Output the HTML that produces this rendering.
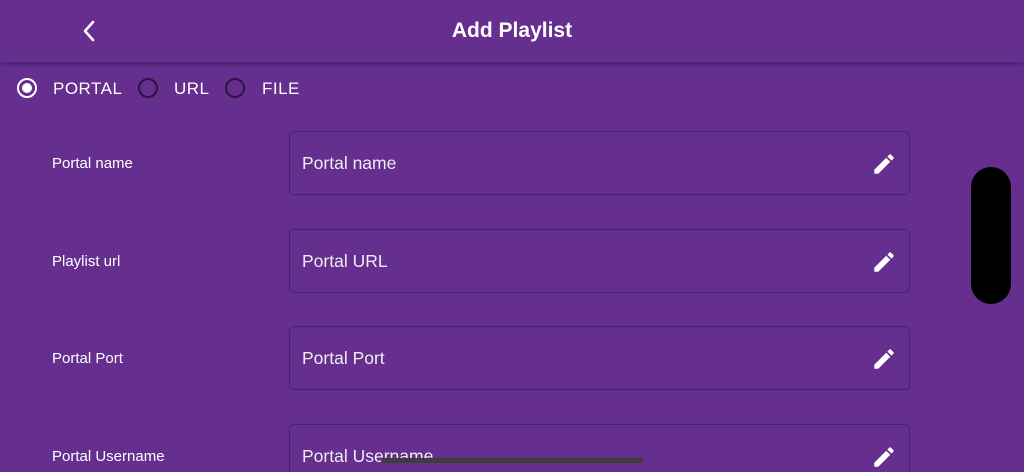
<!DOCTYPE html>
<html><head><meta charset="utf-8"><style>
*{margin:0;padding:0;box-sizing:border-box}
html,body{width:1024px;height:472px;overflow:hidden}
body{background:#652e8f;font-family:"Liberation Sans",sans-serif;color:#fff;position:relative}
.hdr{position:absolute;left:0;top:0;width:1024px;height:62px;background:#652e8f;box-shadow:0 2px 4px rgba(0,0,0,.3);z-index:2}
.title{position:absolute;left:0;width:1024px;top:19px;text-align:center;font-size:21px;font-weight:bold}
.radio{position:absolute;top:78px;width:20px;height:20px;border-radius:50%;border:2px solid #2a1640}
.radio.on{border-color:#fff}
.radio.on:after{content:"";position:absolute;left:3px;top:3px;width:10px;height:10px;border-radius:50%;background:#fff}
.rl{position:absolute;top:79px;font-size:17px;letter-spacing:.5px}
.lab{position:absolute;left:52px;font-size:15px}
.field{position:absolute;left:289px;width:621px;height:64px;border:1.5px solid #4a2170;border-radius:5px}
.field span{position:absolute;left:12px;top:21px;font-size:17.5px;color:#eee}
.field svg{position:absolute;right:12px;top:19px}
</style></head><body>
<div class="hdr">
<svg style="position:absolute;left:80px;top:19px" width="18" height="24" viewBox="0 0 18 24"><path d="M13 3 L5 12 L13 21" stroke="#fff" stroke-width="2.6" fill="none" stroke-linecap="round" stroke-linejoin="round"/></svg>
<div class="title">Add Playlist</div>
</div>
<div class="radio on" style="left:17px"></div><div class="rl" style="left:53px">PORTAL</div>
<div class="radio" style="left:138px"></div><div class="rl" style="left:174px">URL</div>
<div class="radio" style="left:225px"></div><div class="rl" style="left:262px">FILE</div>

<div class="lab" style="top:155px">Portal name</div>
<div class="field" style="top:131px"><span>Portal name</span><svg width="26" height="26" viewBox="0 0 24 24"><path fill="#fff" d="M3 17.25V21h3.75L17.81 9.94l-3.75-3.75L3 17.25zM20.71 7.04a1 1 0 000-1.41l-2.34-2.34a1 1 0 00-1.41 0l-1.83 1.83 3.75 3.75 1.83-1.83z"/></svg></div>
<div class="lab" style="top:253px">Playlist url</div>
<div class="field" style="top:229px"><span>Portal URL</span><svg width="26" height="26" viewBox="0 0 24 24"><path fill="#fff" d="M3 17.25V21h3.75L17.81 9.94l-3.75-3.75L3 17.25zM20.71 7.04a1 1 0 000-1.41l-2.34-2.34a1 1 0 00-1.41 0l-1.83 1.83 3.75 3.75 1.83-1.83z"/></svg></div>
<div class="lab" style="top:350px">Portal Port</div>
<div class="field" style="top:326px"><span>Portal Port</span><svg width="26" height="26" viewBox="0 0 24 24"><path fill="#fff" d="M3 17.25V21h3.75L17.81 9.94l-3.75-3.75L3 17.25zM20.71 7.04a1 1 0 000-1.41l-2.34-2.34a1 1 0 00-1.41 0l-1.83 1.83 3.75 3.75 1.83-1.83z"/></svg></div>
<div class="lab" style="top:448px">Portal Username</div>
<div class="field" style="top:424px"><span>Portal Username</span><svg width="26" height="26" viewBox="0 0 24 24"><path fill="#fff" d="M3 17.25V21h3.75L17.81 9.94l-3.75-3.75L3 17.25zM20.71 7.04a1 1 0 000-1.41l-2.34-2.34a1 1 0 00-1.41 0l-1.83 1.83 3.75 3.75 1.83-1.83z"/></svg></div>

<div style="position:absolute;left:971px;top:167px;width:40px;height:137px;border-radius:20px;background:#000"></div>
<div style="position:absolute;left:381px;top:458px;width:262px;height:5px;border-radius:3px;background:#3d3d3d"></div>
</body></html>
